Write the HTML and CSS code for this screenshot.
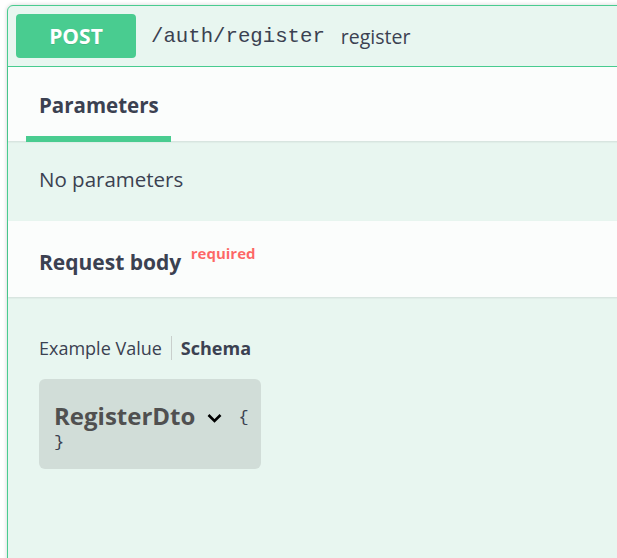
FILE: index.html
```html
<!DOCTYPE html>
<html>
<head>
<meta charset="utf-8">
<link rel="stylesheet" href="styles.css">
</head>
<body>
<div class="wrap">
  <div class="opblock">
    <div class="summary">
      <span class="method">POST</span>
      <span class="path">/auth/register</span>
      <span class="desc">register</span>
    </div>
    <div class="section-header tab-header">
      <h4 class="tab">Parameters</h4>
    </div>
    <div class="params">
      <p class="no-params">No parameters</p>
    </div>
    <div class="section-header body-header">
      <h4 class="title">Request body <span class="required">required</span></h4>
    </div>
    <div class="body">
      <div class="tabs">
        <span class="tab-link">Example Value</span>
        <span class="sep"></span>
        <span class="tab-link active">Schema</span>
      </div>
      <div class="model-box">
        <div class="model-line">
          <span class="model-title">RegisterDto</span>
          <svg class="chev" width="15" height="10" viewBox="0 0 15 10"><path d="M1.5 2 L7.5 8 L13.5 2" fill="none" stroke="#000" stroke-width="2.6"/></svg>
          <span class="brace">{</span>
        </div>
        <div class="brace close">}</div>
      </div>
    </div>
  </div>
</div>
</body>
</html>
```
FILE: styles.css
```css
html, body {
  margin: 0;
  padding: 0;
  background: #fff;
  overflow: hidden;
  width: 617px;
  height: 558px;
}
.wrap {
  padding: 5px 0 0 7px;
}
.opblock {
  width: 720px;
  height: 600px;
  border: 1px solid #49cc90;
  border-radius: 6px;
  background: #e8f6f0;
  box-shadow: 0 0 4px rgba(0,0,0,.19);
  font-family: "Open Sans", "Noto Sans", sans-serif;
  color: #3b4151;
}
.summary {
  display: flex;
  align-items: center;
  height: 60px;
  padding: 0 8px;
  border-bottom: 1px solid #49cc90;
}
.method {
  width: 120px;
  height: 44px;
  border-radius: 4px;
  background: #49cc90;
  color: #fff;
  font-weight: 700;
  font-size: 21px;
  display: flex;
  align-items: center;
  justify-content: center;
  text-shadow: 0 1px 0 rgba(0,0,0,.1);
}
.path {
  margin-left: 15px;
  font-family: "Liberation Mono", "DejaVu Sans Mono", monospace;
  font-size: 20.7px;
  color: #3b4151;
}
.desc {
  margin-left: 16px;
  font-size: 19.5px;
  color: #3b4151;
}
.section-header {
  background: #fbfdfc;
  box-shadow: 0 1px 2px rgba(0,0,0,.1);
  position: relative;
  display: flex;
  align-items: center;
}
.tab-header {
  height: 74px;
  padding-left: 31px;
}
.tab {
  margin: 0;
  font-size: 20.5px;
  font-weight: 700;
  position: relative;
  top: 1px;
}
.tab::after {
  content: "";
  position: absolute;
  left: -11%;
  width: 121%;
  bottom: -23px;
  height: 6px;
  background: #49cc90;
}
.params {
  height: 80px;
  display: flex;
  align-items: center;
  padding-left: 31px;
}
.no-params {
  margin: 0 0 4px 0;
  font-size: 20.5px;
}
.body-header {
  height: 76px;
  padding-left: 31px;
}
.title {
  margin: 0;
  font-size: 21px;
  font-weight: 700;
  position: relative;
  top: 0;
}
.required {
  color: rgba(255,0,0,.6);
  font-size: 15px;
  font-weight: 700;
  vertical-align: 11px;
  margin-left: 4px;
}
.body {
  padding: 38px 0 0 31px;
}
.tabs {
  display: flex;
  align-items: center;
  height: 26px;
}
.tab-link {
  font-size: 18px;
}
.tab-link.active {
  font-weight: 700;
}
.sep {
  width: 1px;
  height: 24px;
  background: #c9cfcc;
  margin: 0 9px 0 9px;
}
.model-box {
  margin-top: 18px;
  width: 222px;
  height: 90px;
  box-sizing: border-box;
  padding: 19px 0 0 15px;
  border-radius: 6px;
  background: #d1ddd8;
}
.model-line {
  display: flex;
  align-items: center;
  height: 34px;
}
.model-title {
  font-size: 24px;
  font-weight: 700;
  color: #505050;
  flex-shrink: 0;
}
.chev {
  flex-shrink: 0;
  margin-left: 12px;
  margin-top: 6px;
}
.brace {
  font-family: "Liberation Mono", monospace;
  font-size: 17px;
  line-height: 18px;
  color: #3b4151;
}
.model-line .brace {
  margin-left: 16px;
  margin-top: 6px;
}
.brace.close {
  margin-top: 2px;
}
```
